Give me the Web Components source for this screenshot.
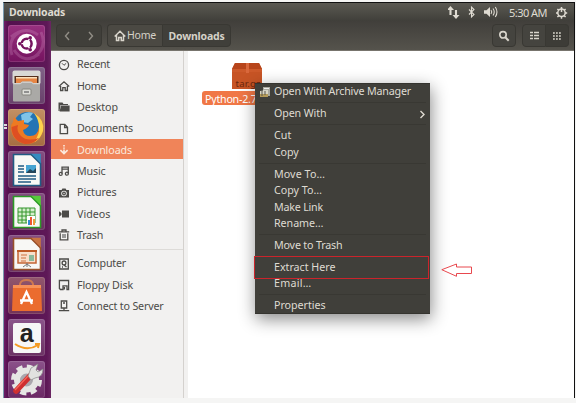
<!DOCTYPE html>
<html lang="en"><head><meta charset="utf-8"><title>Downloads</title>
<style>html,body{margin:0;width:576px;height:403px;overflow:hidden;background:#f5f5f4;font-family:"Noto Sans","Open Sans",sans-serif;font-size:10.7px}</style></head>
<body><desktop-screen></desktop-screen>
<script>
const define=(name,html,ready)=>customElements.define(name,class extends HTMLElement{
  connectedCallback(){
    if(this.shadowRoot)return;
    const t=document.createElement('template');
    t.innerHTML=typeof html==='function'?html(this):html;
    this.attachShadow({mode:'open'}).append(t.content.cloneNode(true));
    if(ready)ready(this);
  }});

// Text label whose letter spacing is tuned to fill the width "w".
define('ui-text','<style>:host{display:inline-block;white-space:pre;line-height:1;flex:none}span{display:inline-block}</style><span><slot></slot></span>',el=>{
  const s=el.shadowRoot.querySelector('span'),w=+el.getAttribute('w');
  if(w){s.style.letterSpacing=((w-s.getBoundingClientRect().width)/el.textContent.length)+'px';el.style.width=w+'px';}
});

const side={
recent:'<circle cx="6" cy="6" r="4.6"/><path d="M4 4.3l2 2 2.2-2" stroke-width="1"/>',
home:'<path d="M.8 6.6L6 1.8l5.2 4.8M2.6 6v4.5h2.2V7.7h2.4v2.8h2.2V6"/>',
desktop:'<path d="M.5 1.5h4l1 1.5H10v1H2.5L1.5 10H.5zM3 4.6h8.6v6H1.6z" fill="currentColor" stroke="none"/>',
documents:'<path d="M2.2 1.3h4.6l2.7 2.9v6.5H2.2zM6.6 1.5v3h3"/>',
downloads:'<path d="M6 1v1.4M6 3.4v1.4M6 5.6v4M2.4 6.2L6 9.6l3.6-3.4" stroke-width="1.6"/>',
music:'<path d="M4 8.6V2.2h6.3v6.2M4 4.2h6"/><circle cx="2.7" cy="8.9" r="1.5"/><circle cx="8.9" cy="8.7" r="1.5"/>',
pictures:'<path fill-rule="evenodd" d="M1 3h2.6l.8-1.6h3.2L8.4 3H11v7.6H1zM6 3.7a2.8 2.8 0 100 5.6 2.8 2.8 0 000-5.6z" fill="currentColor" stroke="none"/><circle cx="6" cy="6.5" r="1.3"/>',
videos:'<path d="M4 2.5h7v7H4zM1 3.3L3.5 5v2L1 8.7z" fill="currentColor" stroke="none"/>',
trash:'<path d="M.8 2.8h10.4M4 2.5V1h4v1.5M2.2 4.3v6.6h7.6V4.3"/><path d="M4 5h4v4H4z" fill="#999" stroke="none"/>',
computer:'<path d="M1.7 1h8.6v10H1.7z"/><circle cx="6" cy="4.9" r="1.9"/><path d="M4 9h1M6 7l2.5 2"/>',
floppy:'<path d="M1.4 1.5h9.2v9H9V6.8H5v3.7H2.5L1.4 9.4zM6.4 8v2.5"/>',
server:'<path d="M3.3 1h5.4v7H3.3zM6 8v2.5M.8 10.7h10.4M5 3h2"/>'};
define('side-item',el=>`<style>:host{display:flex;align-items:center;height:21.35px;padding-left:7px;color:#4c4b48;box-sizing:border-box}
:host([active]){color:#fbe9dd;background:linear-gradient(transparent .4px,#f08459 .4px,#f08459 20.4px,transparent 20.4px)}
svg{width:12px;height:12px;margin-right:7px;flex:none}</style><svg viewBox="0 0 12 12" fill="none" stroke="currentColor" stroke-width="1.3">${side[el.getAttribute('icon')]}</svg><ui-text w="${el.getAttribute('w')}">${el.getAttribute('label')}</ui-text>`);
define('side-bar',`<style>:host{display:block;width:133px;box-sizing:border-box;background:#f2f1f0;padding-top:3px;border-right:1px solid #d4d1ce}hr{border:0;border-top:1px solid #dddbd8;margin:2.5px 0 3.5px}</style>
${[['recent','Recent',33],['home','Home',29],['desktop','Desktop',41],['documents','Documents',56],['downloads','Downloads',55],['music','Music',28.5],['pictures','Pictures',39.5],['videos','Videos',33.5],['trash','Trash',26]].map(a=>`<side-item icon="${a[0]}" label="${a[1]}" w="${a[2]}" ${a[0]=='downloads'?'active':''}></side-item>`).join('')}<hr>
${[['computer','Computer',49],['floppy','Floppy Disk',56],['server','Connect to Server',86.5]].map(a=>`<side-item icon="${a[0]}" label="${a[1]}" w="${a[2]}"></side-item>`).join('')}`);

const doc=(c,l,inner)=>`<path d="M5.5 3.5H24L32.5 12v22.5h-27z" fill="#f8f8f5" stroke="${c}" stroke-width="1.6"/><path d="M22.5 2.7h10.3V13z" fill="${l}"/><path d="M22.5 3L32.5 13" stroke="${c}" stroke-width="1.3"/>${inner}`;
const apps={
dash:['#98317f','#75135f','<path d="M3 12Q17 0 30 10M33 7Q40 23 25 33M4 30Q-1 14 12 7M6 25Q16 40 31 29" fill="none" stroke="#dba5cf" stroke-width="3" opacity=".25"/><circle cx="18.7" cy="18.7" r="10" fill="#fff"/><circle cx="18.7" cy="18.7" r="4.9" fill="none" stroke="#75135f" stroke-width="2.5"/><path d="M18.7 18.7h-9M18.7 18.7l4.7 8M18.7 18.7l4.7-8" stroke="#fff" stroke-width="1.3"/><circle cx="11.8" cy="18.7" r="1.8" fill="#75135f"/><circle cx="22.2" cy="12.7" r="1.8" fill="#75135f"/><circle cx="22.2" cy="24.7" r="1.8" fill="#75135f"/><circle cx="18.7" cy="18.7" r="3.3" fill="#fff"/>'],
files:['#806287','#68406a','<rect x="4.5" y="3.5" width="28" height="14" rx="2" fill="#d8d8d5"/><path d="M6.5 9h24v8h-24z" fill="#55301d"/><path d="M8 10h21v7H8z" fill="#e68645"/><path d="M8 10h21v1.5H8z" fill="#fae1bd"/><path d="M5 16h7l2-1.5h9L25 16h7v17.5q0 1-1 1H6q-1 0-1-1z" fill="#aaa9a6"/><path d="M5.3 16.7h7l2-1.5h9l2 1.5h6.7" stroke="#ddd" fill="none"/><rect x="14" y="22" width="9" height="6" rx="1" fill="#deded9" stroke="#85857f"/><path d="M16 25h5" stroke="#777" stroke-width="1.5"/>'],
firefox:['#c29063','#a56d42','<circle cx="19.5" cy="17" r="14" fill="#2374b4"/><path d="M13 6q6-4 12-2l-3 4 3 2-5 4-6-1z" fill="#7fc4e8"/><path d="M26 4Q37 11 35 22 31 35 18 35 4 33 3 19q0-4 2-6l1-5 4 4 6-1 0 4 5 1q-1 3-6 5 1 6 7 6 8 0 9-9 2-7-5-14z" fill="#ee7a22"/><path d="M26 4Q37 11 35 22q-3 9-9 11 6-8 5-15 0-7-5-14z" fill="#fdd34c"/><path d="M3.500 18Q4 32 17 35q9 0 14-6-12 4-18-2-5-5-3-11z" fill="#de4f22"/>'],
writer:['#844f82','#69305f',doc('#215b84','#348cc0','<path d="M18 14h10v8H18z" fill="#46a4d2"/><path d="M18 22l4-4 3 2 3-3v5z" fill="#24465a"/><path d="M10 15h6M10 18h6M10 21h6M10 25h18M10 28h18M10 31h13" stroke="#205b82" stroke-width="1.4"/>')],
calc:['#844f82','#69305f',doc('#2c9926','#57ca3c','<path d="M10 15h17v15H10z" fill="#d6efce" stroke="#34962c"/><path d="M14 15v15M18 15v15M22 15v15M10 19h17M10 23h17M10 27h17" stroke="#34962c"/><path d="M19 23h8v9h-8z" fill="#fff"/><path d="M20 27h2v5h-2z" fill="#328bd0"/><path d="M22 24h2v8h-2z" fill="#ed5733"/><path d="M25 26h2v6h-2z" fill="#ef9c38"/>')],
impress:['#844f82','#69305f',doc('#985029','#c77442','<path d="M10 16h18v12H10z" fill="#f8dfcb" stroke="#c46534" stroke-width="1.5"/><path d="M9 16h20" stroke="#bd5925" stroke-width="2"/><path d="M13 20h6M13 23h5M13 26h5" stroke="#cd713e"/><path d="M21 20h5v6h-5z" fill="#8cb99b"/><path d="M15 32l4-3 4 3M19 28v4" stroke="#777" fill="none"/>')],
software:['#91576d','#743257','<path d="M12 12V7q1-4 6.500-4T25 7v5" fill="none" stroke="#ce7850" stroke-width="2"/><path d="M5 8h28l1 26H4z" fill="#eb6c2e"/><path d="M5 8h28v3H5z" fill="#f79159"/><path d="M13 27l5.500-12L24 27M12 23.500h13" fill="none" stroke="#fff" stroke-width="2.300"/>'],
amazon:['#8a548a','#6c3264','<rect x="5" y="4" width="28" height="30" rx="2" fill="#f6f6f6"/><text x="18.7" y="23" text-anchor="middle" font-family="Liberation Sans" font-weight="bold" font-size="25" fill="#222">a</text><path d="M7 25q12 8 23 1M27 25h4l-1 4" fill="none" stroke="#f49b24" stroke-width="2"/>'],
settings:['#8b528a','#6b2864','<circle cx="18.5" cy="19" r="13" fill="none" stroke="#e6e6e4" stroke-width="5" stroke-dasharray="6 4.200"/><circle cx="18.5" cy="19" r="9.5" fill="#aaa7ad" stroke="#e6e6e4" stroke-width="6"/><path d="M22 15L8 30" stroke="#cf2f30" stroke-width="5.5" stroke-linecap="round"/><path d="M20 15L7 29" stroke="#f6675a" stroke-width="1.2"/><path d="M20 15l3-8 7-4-2 6 2 2 5-3q0 8-8 9l-4 2z" fill="#e1e1df" stroke="#888" stroke-width=".7"/>']};
define('launcher-tile',el=>{const a=apps[el.getAttribute('app')];return `<style>:host{display:block;width:37px;height:37px;flex:none;border-radius:3px;background:linear-gradient(${a[0]},${a[1]});box-shadow:inset 0 0 0 1px #ffffff20}svg{display:block;width:37px;height:37px}</style><svg viewBox="0 0 37 37">${a[2]}</svg>`});
define('app-launcher',`<style>:host{display:flex;flex-direction:column;gap:5px;width:47px;box-sizing:border-box;padding:4px 0 0 4px;background:linear-gradient(90deg,#6c1d65,#54104e 4px,#5e1857 43px,#6a2662);overflow:hidden;position:relative}i{position:absolute;left:0;top:103px;width:3px;height:2px;background:#ddd;box-shadow:0 3px #ddd}</style>${Object.keys(apps).map(k=>`<launcher-tile app="${k}"></launcher-tile>`).join('')}<i></i>`);

define('top-panel',`<style>:host{display:flex;align-items:center;height:18px;box-sizing:border-box;padding:0 6px 0 5px;background:linear-gradient(#5b5952,#403f3a);color:#dfdbd2}b{font-size:10.5px;flex:1}svg{width:125px;height:16px;flex:none}.t{margin-left:-64px;font-size:11px}.g{width:13px;height:13px;margin-left:8px}</style><b><ui-text w="56">Downloads</ui-text></b>
<svg viewBox="2 0 125 16" fill="none" stroke="#dfdbd2" stroke-width="1.5"><path d="M4.500 11V4M10 6v7" stroke-width="2.1"/><path d="M1 6l3.500-4L8 6zM6.500 11l3.500 4 3.500-4z" fill="#dfdbd2" stroke="none"/><path d="M23 5.500l5 5-2.500 2.500V3l2.500 2.500-5 5" stroke-width="1.100"/><path d="M38 6.300h2.500L44 3v10l-3.500-3.300H38z" fill="#dfdbd2" stroke="none"/><path d="M45 6q1.500 2 0 4M47 4.500q2.500 3.500 0 7M49.300 3q3.300 5 0 10" stroke-width="1.1"/></svg>
<ui-text class="t" w="38">5:30 AM</ui-text><svg class="g" viewBox="0 0 13 13" fill="none" stroke="#dfdbd2"><circle cx="6.5" cy="6.8" r="3.7" stroke-width="1.5"/><path d="M6.500 1v5M1 7h2M10 7h2.200M2.400 3l1.500 1.400M10.600 3L9.100 4.400M2.400 11l1.500-1.400M10.600 11L9.100 9.600M6.500 11v1.800" stroke-width="1.5"/></svg>`);
define('tool-bar',`<style>:host{display:flex;align-items:center;height:30px;flex:none;box-sizing:border-box;background:linear-gradient(#413f3b,#55534c);border-bottom:1px solid #77746d;color:#d5d1c8;padding:0 5px 0 5px}
div{display:flex;align-items:center;justify-content:center;height:23px;box-sizing:border-box;border:1px solid #393833;border-radius:4px;background:#45443f}
.nav{width:46px;background:#403f3a;margin-right:5px}.home{width:55px;border-radius:4px 0 0 4px;border-right:0;background:#4b4943}.cur{width:69px;border-radius:0 4px 4px 0;background:#403f3a}.find{width:24px;margin-left:auto}.list{width:24px;margin-left:6px;border-radius:4px 0 0 4px}.grid{width:23px;border-radius:0 4px 4px 0;border-left:0;background:#3d3c37}svg{fill:none;stroke:#d9d5cc}.home svg{margin-right:1px}ui-text{font-size:10.5px}</style>
<div class="nav"><svg width="42" height="18" viewBox="0 0 42 18" style="stroke:#918e86;stroke-width:1.4"><path d="M12 5L8.500 9l3.500 4M32 5l3.500 4-3.500 4" transform="translate(-1 0)"/></svg></div>
<div class="home"><svg width="12" height="12" viewBox="0 0 12 12" stroke-width="1.5"><path d="M.7 6.500L6 1.300l5.300 5.200M2.500 5v5.500h2.200v-3h2.600v3h2.200V5"/></svg><ui-text w="29">Home</ui-text></div><div class="cur"><b><ui-text w="56">Downloads</ui-text></b></div>
<div class="find"><svg width="12" height="12" viewBox="0 0 12 12" stroke-width="1.6"><circle cx="5" cy="4.8" r="3.2"/><path d="M7.300 7.200l3.400 3.500" stroke-width="2"/></svg></div>
<div class="list"><svg width="9" height="9" viewBox="0 0 9 9" stroke-width="1.7"><path d="M0 1.500h3M4 1.500h5M0 4.500h3M4 4.500h5M0 7.500h3M4 7.500h5"/></svg></div><div class="grid"><svg width="8" height="8" viewBox="0 0 8 8" stroke-width="1.7" stroke-dasharray="1.8 1.2"><path d="M0 1h8M0 4h8M0 7h8"/></svg></div>`);

define('menu-item',`<style>:host{display:flex;align-items:center;height:16.4px;padding-left:19px;position:relative}::slotted(svg){position:absolute}</style><slot></slot>`);
define('context-menu',`<style>:host{display:block;width:175px;height:231px;box-sizing:border-box;background:#403f3a;border:solid #35342f;border-width:1px 0;color:#dfdbd2;box-shadow:1px 5px 16px #0007}.items{margin-top:-.5px}hr{border:0;border-top:1px solid #393833;margin:2.3px 4px 2.35px}.mark{position:absolute;left:-1px;top:172px;width:175px;height:23px;box-sizing:border-box;border:1px solid #cb242b}.ico{left:4px;top:2px}.chev{right:4px;top:4px}</style><div class="items">
<menu-item><svg class="ico" width="12" height="12" viewBox="0 0 12 12"><path d="M4 1h7v9H4z" fill="#aaa99f"/><path d="M5 2.500h5M4 5h5" stroke="#eee"/><path d="M1 5l8-1v7H1z" fill="#d8d5c4"/><path d="M1 8h8v3H1z" fill="#b49a58"/><path d="M3 5v5M6 5v4" stroke="#58564f"/></svg><ui-text w="137">Open With Archive Manager</ui-text></menu-item><hr>
<menu-item><ui-text w="52.5">Open With</ui-text><svg class="chev" width="7" height="9" viewBox="0 0 7 9"><path d="M1.500 1L5 4.500 1.500 8" fill="none" stroke="#dfdbd2" stroke-width="1.4"/></svg></menu-item><hr>
<menu-item><ui-text w="17.5">Cut</ui-text></menu-item><menu-item><ui-text w="24.5">Copy</ui-text></menu-item><hr>
<menu-item><ui-text w="51">Move To…</ui-text></menu-item><menu-item><ui-text w="48">Copy To…</ui-text></menu-item><menu-item><ui-text w="49">Make Link</ui-text></menu-item><menu-item><ui-text w="49.5">Rename…</ui-text></menu-item><hr>
<menu-item><ui-text w="68.5">Move to Trash</ui-text></menu-item><hr>
<menu-item><ui-text w="61.5">Extract Here</ui-text></menu-item><menu-item><ui-text w="37.5">Email…</ui-text></menu-item><hr>
<menu-item><ui-text w="51.5">Properties</ui-text></menu-item></div><span class="mark"></span>`);
define('file-icon',`<style>:host{display:block;width:58px;height:44px}svg{display:block;margin-left:30px;overflow:visible}.n{box-sizing:border-box;width:58px;height:14px;margin-top:1px;padding:1px 0 0 3px;border-radius:3px;background:#f07746;color:#fff;overflow:hidden}</style><svg width="31" height="27" viewBox="0 0 31 27"><path d="M3 0h24l3 6v20H0V6z" fill="#c75425"/><path d="M3 0h24l3 6H0z" fill="#b7451b"/><path d="M0 6h30v3H0z" fill="#cd5a2b"/><path d="M14 0h3v10h-3z" fill="#d9683c"/><text x="3.5" y="23.5" font-family="Noto Sans" font-size="9.5" fill="#69250d" textLength="25">tar.gz</text></svg><div class="n"><ui-text w="51.5">Python-2.7</ui-text></div>`);
define('file-view',`<style>:host{display:block;position:relative;flex:1;background:#fff;border-left:4px solid #f2f1f0;overflow:hidden}file-icon{position:absolute;left:14px;top:12px}context-menu{position:absolute;left:67px;top:32px}.arrow{position:absolute;left:253px;top:212px}</style><file-icon></file-icon><context-menu></context-menu><svg class="arrow" width="32" height="14" viewBox="0 0 32 14"><path d="M.8 6.700L15.500 1v3h15v6.500h-15v2.800z" fill="#fff" stroke="#e8484e"/></svg>`);
define('desktop-screen',`<style>:host{display:block;width:576px;height:403px;box-sizing:border-box;padding:2px 1px 5px 3px;background:#f5f5f4}.frame{height:396px;box-sizing:border-box;display:flex;flex-direction:column;border:solid #111;border-width:1px 1px 0 1px;border-left-color:#7a9aae}.body{display:flex;flex:1;min-height:0}.win{display:flex;flex:1;flex-direction:column;min-width:0}.content{display:flex;flex:1;min-height:0}</style>
<div class="frame"><top-panel></top-panel><div class="body"><app-launcher></app-launcher><div class="win"><tool-bar></tool-bar><div class="content"><side-bar></side-bar><file-view></file-view></div></div></div></div>`);
</script></body></html>
